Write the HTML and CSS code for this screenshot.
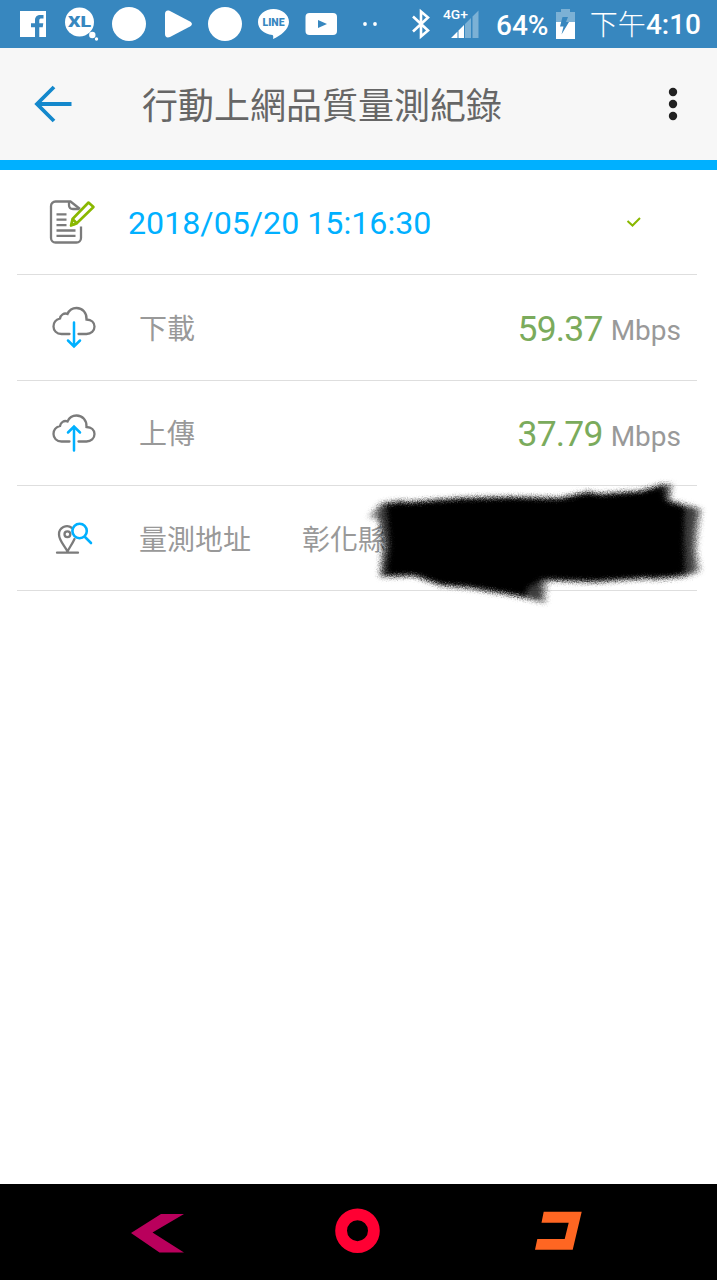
FILE: index.html
```html
<!DOCTYPE html>
<html lang="zh-Hant">
<head>
    <meta charset="UTF-8">
    <meta name="viewport" content="width=device-width, initial-scale=1.0">
    <title>行動上網品質量測紀錄</title>
    <link rel="stylesheet" href="styles.css">
</head>
<body>
    <div class="screen">
        <div class="status-bar">
            <div class="notifications">
                <svg viewBox="0 0 48 48"><path fill="#fff" d="M11 11h26v26h-6.700v-9.700h3.400l.6-4h-4v-2.700c0-1.400.7-2 2.200-2h2V15h-3c-3.500 0-5.500 1.900-5.500 5.300v3h-4v4h4V37H11z"/></svg>
                <svg viewBox="0 0 48 48">
                    <circle cx="22.500" cy="22" r="14.500" fill="#fff"/>
                    <circle cx="35.300" cy="35" r="3.200" fill="#fff"/>
                    <circle cx="39.500" cy="39" r="1.700" fill="#fff"/>
                    <text class="xl-text" x="11" y="27" textLength="23" lengthAdjust="spacingAndGlyphs">XL</text>
                </svg>
                <svg viewBox="0 0 48 48"><circle cx="24" cy="24" r="17" fill="#fff"/></svg>
                <svg viewBox="0 0 48 48"><path fill="#fff" d="M12 14c0-3 2-4.200 5-3l20 10.500c2.500 1.400 2.500 3.600 0 5L17 37c-3 1.200-5 0-5-3z"/></svg>
                <svg viewBox="0 0 48 48"><circle cx="24" cy="24" r="17" fill="#fff"/></svg>
                <svg viewBox="0 0 48 48">
                    <path fill="#fff" d="M24.500 9C33 9 40 14.600 40 22c0 7-8.500 14-16 17 .3-1.500.6-3.500-.5-4C15 34 9 29 9 22 9 14.600 16 9 24.500 9z"/>
                    <text class="line-text" x="13.500" y="26.300" textLength="22" lengthAdjust="spacingAndGlyphs">LINE</text>
                </svg>
                <svg viewBox="0 0 48 48"><rect x="8.500" y="13" width="31.500" height="22" rx="4" fill="#fff"/><path class="cut" d="M21 20v8l9-4z"/></svg>
                <svg viewBox="0 0 48 48"><ellipse cx="20" cy="24" rx="1.900" ry="2.100" fill="#fff"/><ellipse cx="30" cy="24" rx="1.900" ry="2.100" fill="#fff"/></svg>
            </div>
            <svg class="bluetooth" viewBox="0 0 20 32"><path fill="none" stroke="#fff" stroke-width="2.600" d="M2 8.500l15 14-7 6V3.500l7 6-15 14"/></svg>
            <svg class="signal" viewBox="0 0 38 48">
                <text class="net-text" x="0" y="18.500" textLength="25" lengthAdjust="spacingAndGlyphs">4G+</text>
                <path fill="#fff" d="M8 38l6.500-6.500V38zM15.500 30.500l5.500-5.500v13h-5.500z"/>
                <path fill="#fff" opacity=".35" d="M22 24l6-6v20h-6zM29.500 16.500l6-6V38h-6z"/>
            </svg>
            <span class="percent">64%</span>
            <svg class="battery" viewBox="0 0 19 30">
                <path fill="#fff" opacity=".35" d="M0 3h5V0h9v3h5v10H0z"/>
                <path fill="#fff" d="M0 13h19v17H0z"/>
                <path class="cut" d="M6.500 8H12l-2 5h3L5.500 25.500l2-8H4z"/>
            </svg>
            <span class="clock"><span class="ampm">下午</span>4:10</span>
        </div>

        <div class="header">
            <svg class="back" viewBox="0 0 40 40"><path fill="none" stroke="#1488cc" stroke-width="3.800" d="M38.500 20H4M21 3L4 20l17 17"/></svg>
            <h1>行動上網品質量測紀錄</h1>
            <svg class="more" viewBox="0 0 10 34"><circle cx="5" cy="5" r="4.200"/><circle cx="5" cy="17" r="4.200"/><circle cx="5" cy="29" r="4.200"/></svg>
        </div>

        <div class="records">
            <div class="row">
                <svg class="icon" viewBox="0 3.500 60 60" fill="none" stroke="#7b7b7b" stroke-width="2.300">
                    <path d="M39 38v11.500a4.500 4.500 0 0 1-4.500 4.500H13.500A4.500 4.500 0 0 1 9 49.500V17.500a4.500 4.500 0 0 1 4.500-4.500H28.500l9.500 7.500"/>
                    <path d="M27 13v3.500q0 4 4 4h6"/>
                    <path stroke-width="2.300" d="M14.500 25.800h10M14.500 31.200h10M14.500 36.600h10M14.500 42h19M14.500 47.300h19"/>
                    <path stroke="#8ab800" stroke-width="2.600" stroke-linejoin="round" d="M46.500 14l5 4.500-17 16.500-5.500 2 1.500-6.500zM30.500 30.500l4.500 4.500"/>
                    <path fill="#8ab800" stroke="none" d="M28 38l1.500-5.500 4 4z"/>
                </svg>
                <span class="date">2018/05/20 15:16:30</span>
                <svg class="check" viewBox="0 0 16 12"><path fill="none" stroke="#8ab800" stroke-width="2" d="M1.500 5l5 4.500L14 2"/></svg>
            </div>
            <div class="row">
                <svg class="icon" viewBox="0 3.500 60 60" fill="none" stroke="#7b7b7b" stroke-width="2.300" stroke-linecap="round">
                    <path d="M27.500 40.500h-8c-5 0-8-3.500-8-7.500 0-4 2.500-7 6.500-8 .5-3.500 4-6 7.500-4.500 1.500-3.500 5-6 9-6 6 0 10.500 5 10 11.500 5 .2 8 3 8 7 0 4.500-3.500 7.500-8 7.500h-8"/>
                    <path stroke="#00b0ff" stroke-width="2.500" d="M32 29v23.500M26 47l6 6 6-6"/>
                </svg>
                <span class="label">下載</span>
                <span class="value">59.37</span>
                <span class="unit">Mbps</span>
            </div>
            <div class="row">
                <svg class="icon" viewBox="0 3 60 60" fill="none" stroke="#7b7b7b" stroke-width="2.300" stroke-linecap="round">
                    <path d="M27.500 41.500h-8c-5 0-8-3.500-8-7.500 0-4 2.500-7 6.500-8 .5-3.500 4-6 7.500-4.500 1.500-3.500 5-6 9-6 6 0 10.500 5 10 11.500 5 .2 8 3 8 7 0 4.500-3.500 7.500-8 7.500h-8"/>
                    <path stroke="#00b0ff" stroke-width="2.500" d="M32 50.500V26.500M26 32.500l6-6 6 6"/>
                </svg>
                <span class="label">上傳</span>
                <span class="value">37.79</span>
                <span class="unit">Mbps</span>
            </div>
            <div class="row">
                <svg class="icon" viewBox="0 3 60 60" fill="none" stroke="#7b7b7b" stroke-width="2.300" stroke-linecap="round">
                    <path d="M25.500 46.500c-2.500-5-8.500-11-8.500-17a8 8 0 0 1 13-6.500M25.500 46.500c2-4 5-8 7-12.500M15 47.700h21"/>
                    <circle cx="25.400" cy="29.300" r="2.900"/>
                    <circle cx="37.600" cy="26" r="7.200" stroke="#00b0ff" stroke-width="2.600"/>
                    <path stroke="#00b0ff" stroke-width="2.600" d="M43 32l6 6"/>
                </svg>
                <span class="label">量測地址</span>
                <span class="address">彰化縣</span>
                <svg class="scribble" viewBox="0 0 357 150">
                    <filter id="grain" x="-5%" y="-10%" width="110%" height="120%">
                        <feGaussianBlur stdDeviation="2.600" result="soft"/>
                        <feTurbulence type="fractalNoise" baseFrequency=".8" numOctaves="2" seed="4" result="noise"/>
                        <feDisplacementMap in="soft" in2="noise" scale="6" xChannelSelector="R" yChannelSelector="G"/>
                        <feGaussianBlur stdDeviation=".5"/>
                    </filter>
                    <g filter="url(#grain)">
                        <path opacity=".4" d="M8 47L20 33L45 30V107H19L21 75L19 50ZM300 14H313L311 30L342 39L339 60L337 80L341 101L325 107L290 110ZM150 105H188L186 133L150 125Z"/>
                        <path opacity=".6" d="M17 43L24 33L45 31V106H21L25 75ZM300 15H309L308 31L337 39L334 60L333 80L335 102L320 107L290 109ZM145 105H182L181 131L145 123Z"/>
                        <path d="M26 34L60 31L100 28L150 27L200 28L228 22L240 24L280 21L302 15L305 30L325 37L324 70L325 103L310 107L260 110L235 112L182 110L168 118L165 127L110 118L80 115L55 106L26 105L30 75L28 55Z"/>
                    </g>
                </svg>
            </div>
        </div>

        <div class="nav-bar">
            <svg viewBox="0 0 60 48"><path fill="#b9005c" d="M34 6h23L25.500 24.500 57 44.500H32.500L4 25z"/></svg>
            <svg viewBox="0 0 60 48"><circle cx="29.500" cy="22.700" r="16.400" fill="none" stroke="#ff0033" stroke-width="11.800"/></svg>
            <svg viewBox="0 0 60 48"><path fill="#ff6622" d="M14.700 3.700h38l-9 38H6L8.300 31h27.400l4-16.300H12.500z"/></svg>
        </div>
    </div>
</body>
</html>
```
FILE: styles.css
```css
* {
    box-sizing: border-box;
}

body {
    margin: 0;
    background-color: #fff;
    font-family: Roboto, 'Noto Sans CJK TC', sans-serif;
}

svg {
    display: block;
    flex-shrink: 0;
}

.screen {
    width: 717px;
    height: 1280px;
    display: flex;
    flex-direction: column;
    overflow: hidden;
}

.status-bar {
    height: 48px;
    padding: 0 16px 0 9px;
    background-color: #3787bf;
    color: #fff;
    display: flex;
    align-items: center;
    font-size: 28px;
    font-weight: 500;
}

.notifications {
    display: flex;
}

.notifications svg {
    width: 48px;
    height: 48px;
}

.cut {
    fill: #3787bf;
}

.xl-text {
    font: 900 15px Roboto, sans-serif;
    fill: #3787bf;
}

.line-text {
    font: 900 10.5px Roboto, sans-serif;
    fill: #3787bf;
}

.net-text {
    font: 500 13.5px Roboto, sans-serif;
    fill: #fff;
}

.bluetooth {
    width: 20px;
    height: 32px;
    margin-left: 18px;
}

.signal {
    width: 38px;
    height: 48px;
    margin-left: 12px;
}

.percent {
    width: 52px;
    margin-left: 15px;
    line-height: 48px;
    padding-top: 3px;
    white-space: nowrap;
}

.battery {
    width: 19px;
    height: 30px;
    margin-left: 8px;
}

.clock {
    margin-left: auto;
    line-height: 48px;
    padding-top: 3px;
    white-space: nowrap;
}

.ampm {
    font-weight: 300;
    vertical-align: -1px;
}

.header {
    height: 122px;
    padding: 0 39px 0 33px;
    background-color: #f7f7f7;
    border-bottom: 10px solid #00b0ff;
    display: flex;
    align-items: center;
}

.back {
    width: 40px;
    height: 40px;
}

h1 {
    margin: 0 auto 0 69px;
    padding-top: 5px;
    color: #666;
    font-size: 36px;
    font-weight: 400;
    line-height: 52px;
}

.more {
    width: 10px;
    height: 34px;
    fill: #212121;
}

.records {
    flex: 1;
    padding: 0 20px 0 17px;
}

.row {
    position: relative;
    height: 105.3px;
    padding: 0 16px 0 25px;
    border-bottom: 1.5px solid #dedede;
    display: flex;
    align-items: center;
}

.icon {
    width: 60px;
    height: 60px;
}

.date {
    margin-left: 26px;
    padding-top: 2px;
    color: #00b0ff;
    font-size: 32.2px;
}

.check {
    width: 16px;
    height: 12px;
    margin: 0 39px 0 auto;
}

.label {
    margin-left: 37px;
    padding-bottom: 1px;
    color: #999;
    font-size: 28px;
}

.value {
    margin: 0 8px 0 auto;
    padding-top: 3px;
    color: #7bab5c;
    font-size: 35.5px;
    letter-spacing: -0.8px;
}

.unit {
    padding-top: 7px;
    color: #999;
    font-size: 28px;
}

.address {
    margin-left: 51px;
    padding-bottom: 1px;
    color: #999;
    font-size: 28px;
}

/* marker strokes over the street address */
.scribble {
    position: absolute;
    left: 343px;
    top: -16px;
    width: 357px;
    height: 150px;
}

.nav-bar {
    height: 96px;
    padding: 0 128px 0 127px;
    background-color: #000;
    display: flex;
    align-items: center;
    justify-content: space-between;
}

.nav-bar svg {
    width: 60px;
    height: 48px;
}
```
